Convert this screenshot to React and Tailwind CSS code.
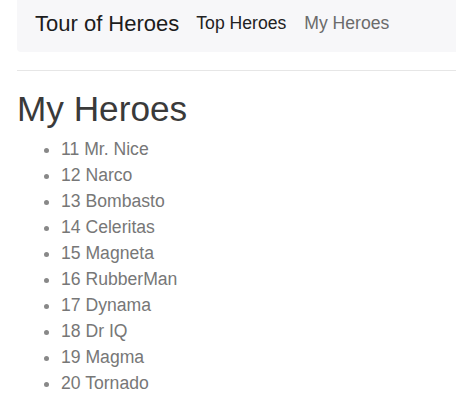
import React from "react";

const heroes = [
  { id: 11, name: "Mr. Nice" },
  { id: 12, name: "Narco" },
  { id: 13, name: "Bombasto" },
  { id: 14, name: "Celeritas" },
  { id: 15, name: "Magneta" },
  { id: 16, name: "RubberMan" },
  { id: 17, name: "Dynama" },
  { id: 18, name: "Dr IQ" },
  { id: 19, name: "Magma" },
  { id: 20, name: "Tornado" },
];

export default function App() {
  return (
    <div className="min-h-[402px] overflow-hidden bg-white pl-[17px] font-['Liberation_Sans',Arial,sans-serif] text-[17.6px] text-[#212529]">
      <nav className="-mr-4 flex h-[52px] items-center gap-[17px] rounded-b bg-[#f7f7f9] px-[18px] pb-[6px]">
        <span className="text-[22px] text-[#1c1c1c]">Tour of Heroes</span>
        <div className="flex gap-[18px]">
          <a className="text-[#222]">Top Heroes</a>
          <a className="text-[#6b6b6b]">My Heroes</a>
        </div>
      </nav>
      <hr className="mt-[18px] border-t border-[#e6e6e6]" />
      <h1 className="mt-[17px] text-[35.2px] leading-[42px] text-[#3a3a3a]">My Heroes</h1>
      <ul className="mt-[6px] list-disc pl-[44px] text-[#777] marker:text-[#888]">
        {heroes.map((h) => (
          <li key={h.id} className="leading-[26px]">
            {h.id} {h.name}
          </li>
        ))}
      </ul>
    </div>
  );
}
